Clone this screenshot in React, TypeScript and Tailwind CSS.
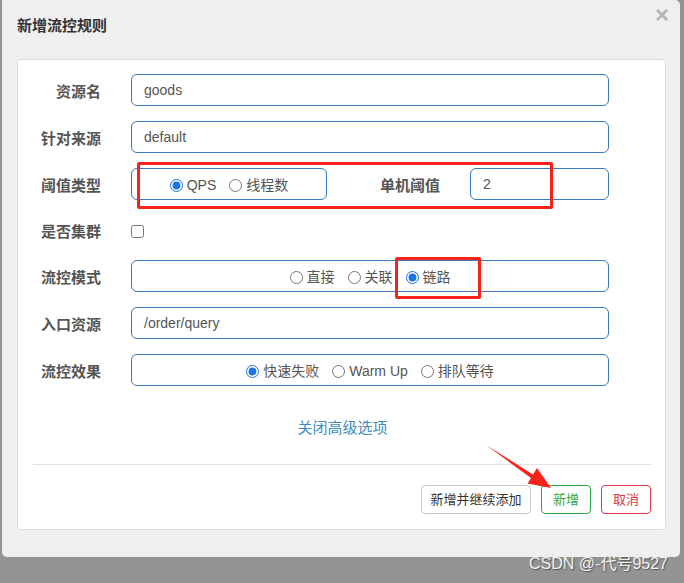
import type { ReactNode } from "react";

const FONT = "[font-family:'Liberation_Sans','Noto_Sans_CJK_SC',sans-serif]";

function Label({ children, width = "w-[67px]" }: { children: ReactNode; width?: string }) {
  return (
    <div className={`${width} shrink-0 pt-[4px] text-right text-[15px] font-bold text-[#555]`}>
      {children}
    </div>
  );
}

function TextBox({ value, width = "w-[478px]" }: { value: string; width?: string }) {
  return (
    <div
      className={`ml-[30px] flex h-[32px] ${width} items-center rounded-[6px] border border-[#3a78b9] px-[12px] pt-[1px] text-[14px] text-[#555]`}
    >
      {value}
    </div>
  );
}

function Radio({ label, checked = false }: { label: string; checked?: boolean }) {
  return (
    <label className="flex items-center gap-[4px] text-[14px] text-[#555]">
      <input type="radio" readOnly checked={checked} className="h-[13px] w-[13px] accent-[#1a73e8]" />
      <span>{label}</span>
    </label>
  );
}

function RadioGroup({ items, selected, width = "w-[478px]" }: { items: string[]; selected: number; width?: string }) {
  return (
    <div
      className={`ml-[30px] flex h-[32px] ${width} items-center justify-center gap-[13px] rounded-[6px] border border-[#3a78b9] pt-[3px]`}
    >
      {items.map((it, i) => (
        <Radio key={it} label={it} checked={i === selected} />
      ))}
    </div>
  );
}

export default function App() {
  return (
    <div className={`relative h-[583px] w-[684px] overflow-hidden bg-[#939393] ${FONT}`}>
      <div className="ml-[2px] flex h-[557px] w-[678px] flex-col rounded-b-[5px] rounded-tr-[5px] bg-[#efefef] pl-[15px] pr-[14px]">
        <div className="flex h-[59px] items-start justify-between">
          <h2 className="mt-[17px] text-[15px] leading-[18px] font-bold text-[#333]">新增流控规则</h2>
          <span className="-mr-[3px] mt-[3px] text-[24px] leading-[24px] font-bold text-[#b4b4b4]">×</span>
        </div>

        <div className="w-[649px] rounded-[4px] border border-[#dcdcdc] bg-white pl-[16px] pr-[14px] pt-[14px] pb-[15px]">
          <div className="flex flex-col gap-[15px]">
            <div className="flex items-center">
              <Label>资源名</Label>
              <TextBox value="goods" />
            </div>
            <div className="flex items-center">
              <Label>针对来源</Label>
              <TextBox value="default" />
            </div>
            <div className="flex items-center">
              <Label>阈值类型</Label>
              <RadioGroup items={["QPS", "线程数"]} selected={0} width="w-[196px]" />
              <Label width="w-[113px]">单机阈值</Label>
              <TextBox value="2" width="w-[139px]" />
            </div>
            <div className="flex h-[30px] items-center">
              <Label>是否集群</Label>
              <input type="checkbox" readOnly className="ml-[30px] mt-[3px] h-[13px] w-[13px]" />
            </div>
            <div className="flex items-center">
              <Label>流控模式</Label>
              <RadioGroup items={["直接", "关联", "链路"]} selected={2} />
            </div>
            <div className="flex items-center">
              <Label>入口资源</Label>
              <TextBox value="/order/query" />
            </div>
            <div className="flex items-center">
              <Label>流控效果</Label>
              <RadioGroup items={["快速失败", "Warm Up", "排队等待"]} selected={0} />
            </div>
          </div>

          <div className="mt-[32px] h-[20px] text-center text-[15px] leading-[20px] text-[#3c8dbc]">关闭高级选项</div>

          <div className="mt-[26px] -ml-[1px] border-t border-[#e2e2e2]" />

          <div className="mt-[20px] flex justify-end gap-[10px]">
            <button className="h-[29px] w-[110px] rounded-[4px] border border-[#c8c8c8] bg-white text-[13px] text-[#333]">
              新增并继续添加
            </button>
            <button className="h-[29px] w-[50px] rounded-[4px] border border-[#28a745] bg-white text-[13px] text-[#28a745]">
              新增
            </button>
            <button className="h-[29px] w-[50px] rounded-[4px] border border-[#dc3545] bg-white text-[13px] text-[#dc3545]">
              取消
            </button>
          </div>
        </div>
      </div>

      {/* annotations drawn over the screenshot */}
      <div className="absolute left-[137px] top-[162px] h-[47px] w-[416px] rounded-[2px] border-[3px] border-[#f5231a]" />
      <div className="absolute left-[395px] top-[257px] h-[42px] w-[86px] rounded-[2px] border-[3px] border-[#f5231a]" />
      <svg className="absolute left-0 top-0" width="684" height="583">
        <polygon
          points="486,445 533,474.5 537,468 551,488 527.5,483.5 531,478"
          fill="#f5231a"
        />
      </svg>

      <div className="absolute right-[16px] bottom-[7px] text-[16px] text-[#f2f2f2] [text-shadow:1px_1px_1px_#555]">
        CSDN @-代号9527
      </div>
    </div>
  );
}
